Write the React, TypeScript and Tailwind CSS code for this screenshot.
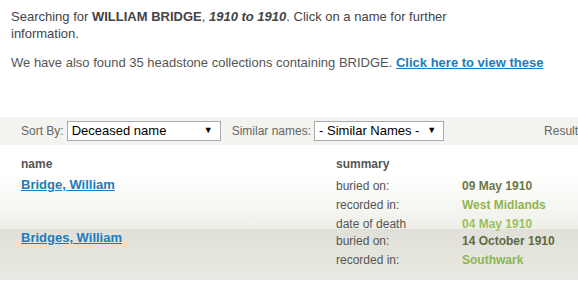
import React from "react";

type Detail = { label: string; value: string; tone: string };

type Row = {
  name: string;
  bg: string;
  height: string;
  pad: string;
  namePad: string;
  details: Detail[];
};

const rows: Row[] = [
  {
    name: "Bridge, William",
    bg: "bg-gradient-to-b from-white to-[#efefe9]",
    height: "h-[54px]",
    pad: "pt-[1px]",
    namePad: "pt-[0px]",
    details: [
      { label: "buried on:", value: "09 May 1910", tone: "text-[#6b7846]" },
      { label: "recorded in:", value: "West Midlands", tone: "text-[#8fb54f]" },
      { label: "date of death", value: "04 May 1910", tone: "text-[#9cc05a]" },
    ],
  },
  {
    name: "Bridges, William",
    bg: "bg-gradient-to-b from-[#e0e0d8] to-[#e9e9e3]",
    height: "h-[51px]",
    pad: "pt-[2px]",
    namePad: "pt-[0px] -mt-[2px]",
    details: [
      { label: "buried on:", value: "14 October 1910", tone: "text-[#5e6a44]" },
      { label: "recorded in:", value: "Southwark", tone: "text-[#8db44d]" },
    ],
  },
];

function Select({ label, width }: { label: string; width: string }) {
  return (
    <div
      className={`flex items-center justify-between h-[20px] border border-[#a9a9a9] bg-white pl-[4px] pr-[7px] text-[13px] text-black ${width}`}
    >
      <span>{label}</span>
      <span className="text-[9px]">▼</span>
    </div>
  );
}

export default function App() {
  return (
    <div className="w-[578px] h-[287px] overflow-hidden bg-white font-['Liberation_Sans',Arial,sans-serif]">
      {/* intro text */}
      <div className="pl-[11px] pt-[8px] text-[13px] leading-[17px] text-[#444]">
        <p className="w-[440px]">
          Searching for <b>WILLIAM BRIDGE</b>, <b><i>1910 to 1910</i></b>. Click on a name for further information.
        </p>
        <p className="mt-[12px] text-[#555]">
          We have also found 35 headstone collections containing BRIDGE.{" "}
          <a className="font-bold text-[#1b7cc0] underline">Click here to view these</a>
        </p>
      </div>

      {/* filter bar */}
      <div className="mt-[46px] flex items-center h-[28px] bg-[#f3f3ef] w-[620px] text-[12px] text-[#666]">
        <span className="ml-[21px] mr-[3px]">Sort By:</span>
        <Select label="Deceased name" width="w-[154px]" />
        <span className="ml-[11px] mr-[3px]">Similar names:</span>
        <Select label="- Similar Names -" width="w-[130px]" />
        <span className="ml-[100px]">Results</span>
      </div>

      {/* table */}
      <div className="mt-[7px]">
        <div className="flex h-[23px] items-center text-[12px] font-bold text-[#555]">
          <div className="pl-[21px] w-[336px]">name</div>
          <div>summary</div>
        </div>
        {rows.map((row) => (
          <div key={row.name} className={`flex ${row.height} ${row.pad} ${row.bg}`}>
            <div className={`pl-[21px] w-[336px] text-[13px] leading-[17px] ${row.namePad}`}>
              <a className="font-bold text-[#1b7cc0] underline">{row.name}</a>
            </div>
            <div className="flex flex-col">
              {row.details.map((d) => (
                <div key={d.label} className="flex h-[19px] shrink-0 items-center text-[12px] leading-[14px]">
                  <span className="w-[126px] text-[#555]">{d.label}</span>
                  <span className={`font-bold ${d.tone}`}>{d.value}</span>
                </div>
              ))}
            </div>
          </div>
        ))}
      </div>
    </div>
  );
}
